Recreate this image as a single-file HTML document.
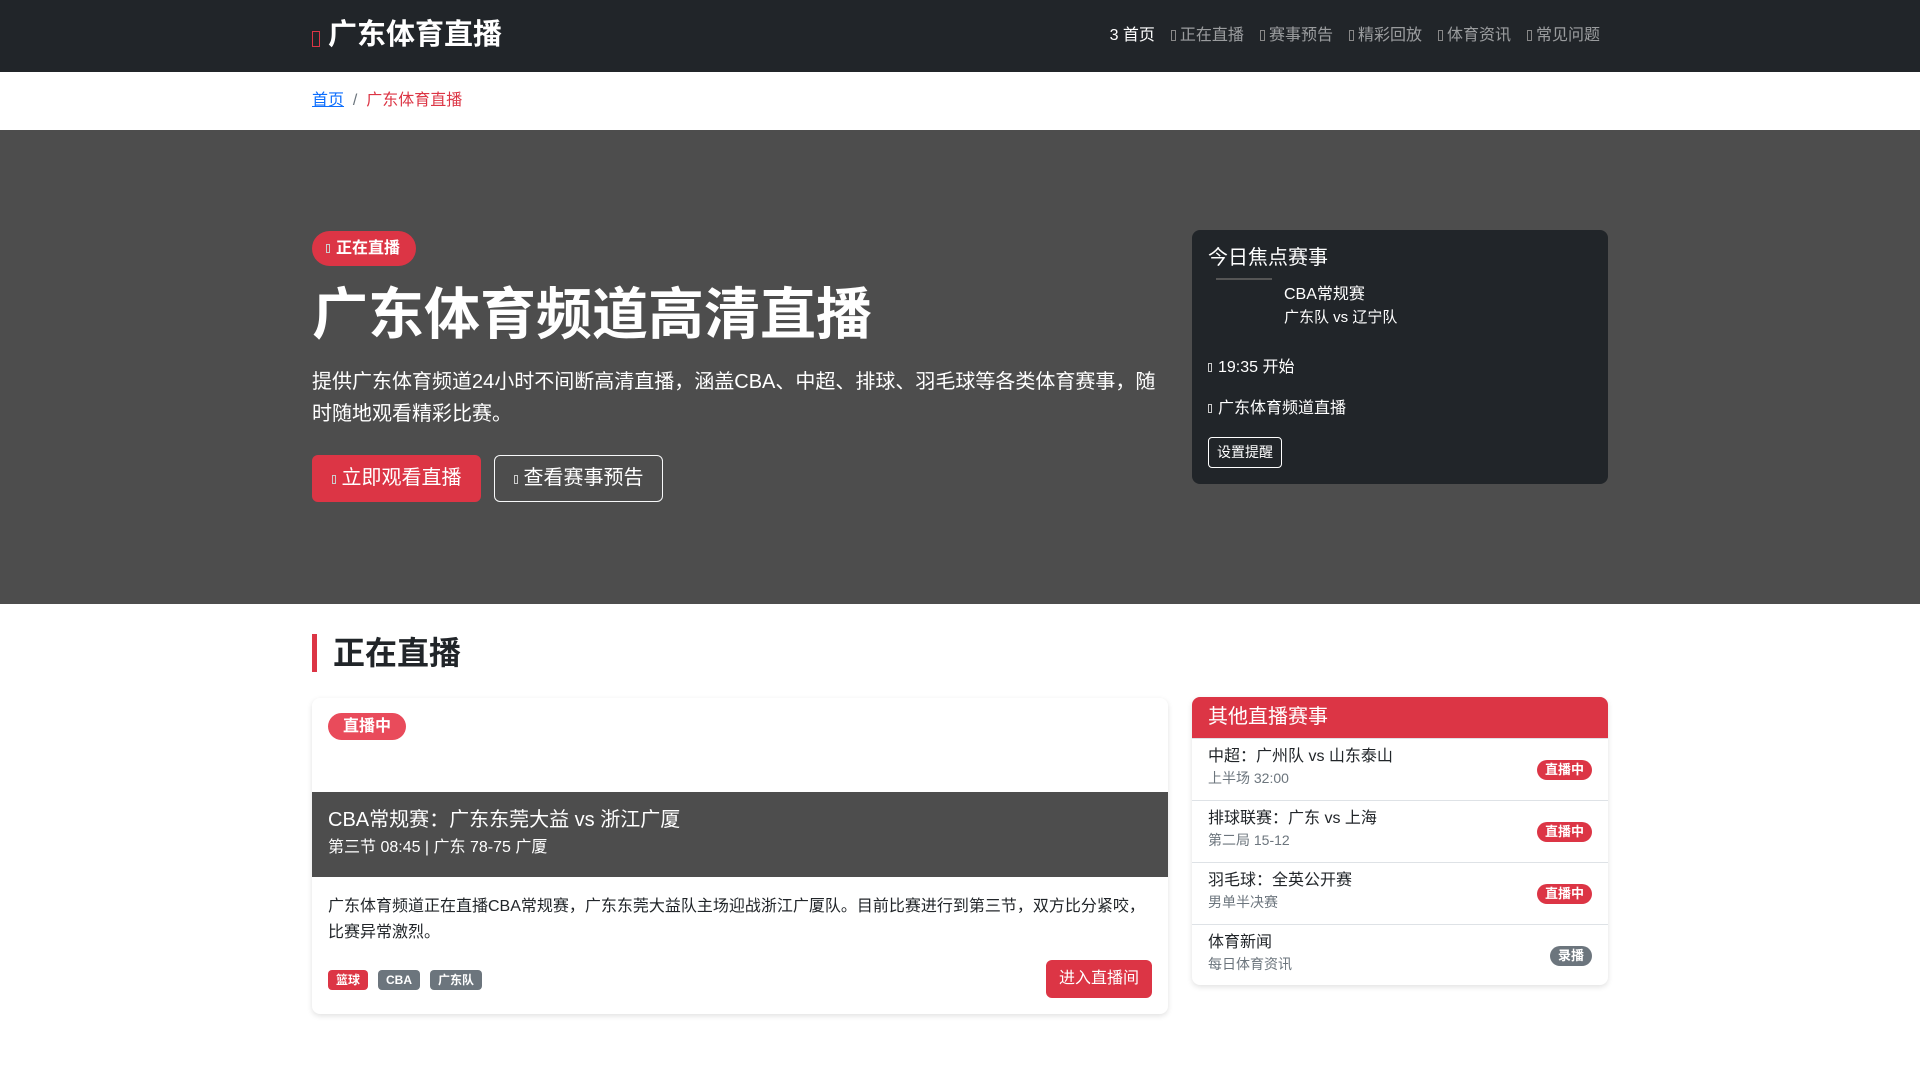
<!DOCTYPE html>
<html><head><meta charset="utf-8"><style>
*{box-sizing:border-box;margin:0;padding:0}
body{width:1920px;height:1080px;overflow:hidden;background:#fff;font-family:"Liberation Sans","Noto Sans CJK SC",sans-serif;color:#212529;font-size:16px;line-height:1.5}
.c{position:absolute}
.nav{position:absolute;left:0;top:0;width:1920px;height:72px;background:#212529}
.brand{left:312px;top:14px;color:#fff;font-size:29px;font-weight:bold}
.brand i{display:inline-block;width:8px;height:16px;border:1.5px solid #dc3545;margin-right:8px;vertical-align:-3px}
.links{right:320px;top:24px;color:rgba(255,255,255,.55);font-size:16px;white-space:nowrap}
.links span{margin-left:16px}
.links b{display:inline-block;width:5px;height:11px;border:1px solid #888;margin-right:4px;vertical-align:-1px}
.bc{left:312px;top:89px;font-size:16px;color:#6c757d}
.hero{position:absolute;left:0;top:130px;width:1920px;height:474px;background:#4d4d4d}
.badge{background:#dc3545;color:#fff;border-radius:20px;font-weight:bold}
.sq{display:inline-block;width:4px;height:9px;border:1px solid #ccc;margin-right:6px}
.btn{position:absolute;border-radius:6px;font-size:20px;color:#fff;text-align:center}
.fc{left:1192px;top:230px;width:416px;height:254px;background:#212529;border-radius:8px;color:#fff}
.sec{left:312px;top:634px;height:38px;border-left:5px solid #dc3545;padding-left:16px;font-size:32px;font-weight:bold;line-height:38px}
.lc{left:312px;top:698px;width:856px;height:316px;background:#fff;border-radius:8px;box-shadow:0 2px 6px rgba(0,0,0,.12);overflow:hidden}
.tag{display:inline-block;color:#fff;font-size:12px;font-weight:bold;padding:1px 8px;border-radius:4px;margin-right:10px}
.sc{left:1192px;top:697px;width:416px;height:288px;background:#fff;border-radius:8px;box-shadow:0 2px 6px rgba(0,0,0,.12);overflow:hidden}
.it{position:absolute;left:0;width:416px;height:62px;border-top:1px solid #dee2e6;padding:6px 16px}
.it .t{font-size:16px}.it .s{font-size:14px;color:#6c757d;line-height:1.3}
.it .b{position:absolute;right:16px;top:21px;font-size:13px;font-weight:bold;color:#fff;padding:0 8px;border-radius:10px;line-height:20px}
</style></head><body>
<div class="nav"></div>
<div class="c brand"><i></i>广东体育直播</div>
<div class="c links"><span style="color:#fff">3 首页</span><span><b></b>正在直播</span><span><b></b>赛事预告</span><span><b></b>精彩回放</span><span><b></b>体育资讯</span><span><b></b>常见问题</span></div>
<div class="c bc"><span style="color:#0d6efd;text-decoration:underline">首页</span> &nbsp;/&nbsp; <span style="color:#dc3545">广东体育直播</span></div>
<div class="hero"></div>
<div class="c badge" style="left:312px;top:231px;height:35px;width:104px;line-height:35px;padding-left:14px;font-size:16px"><span class="sq"></span>正在直播</div>
<div class="c" style="left:312px;top:280px;color:#fff;font-size:56px;font-weight:bold;line-height:70px">广东体育频道高清直播</div>
<div class="c" style="left:312px;top:366px;width:850px;color:#fff;font-size:20px;line-height:32px">提供广东体育频道24小时不间断高清直播，涵盖CBA、中超、排球、羽毛球等各类体育赛事，随时随地观看精彩比赛。</div>
<div class="btn" style="left:312px;top:455px;width:169px;height:47px;background:#dc3545;line-height:47px"><span class="sq"></span>立即观看直播</div>
<div class="btn" style="left:494px;top:455px;width:169px;height:47px;border:1px solid #f8f9fa;line-height:45px"><span class="sq"></span>查看赛事预告</div>
<div class="c fc">
 <div style="position:absolute;left:16px;top:13px;font-size:20px">今日焦点赛事</div>
 <div style="position:absolute;left:24px;top:48px;width:56px;height:2px;background:#555"></div>
 <div style="position:absolute;left:92px;top:53px;font-size:16px">CBA常规赛</div>
 <div style="position:absolute;left:92px;top:77px;font-size:15px">广东队 vs 辽宁队</div>
 <div style="position:absolute;left:16px;top:126px;font-size:16px"><span class="sq"></span>19:35 开始</div>
 <div style="position:absolute;left:16px;top:167px;font-size:16px"><span class="sq"></span>广东体育频道直播</div>
 <div style="position:absolute;left:16px;top:207px;width:74px;height:31px;border:1px solid #fff;border-radius:4px;font-size:14px;text-align:center;line-height:29px">设置提醒</div>
</div>
<div class="c sec">正在直播</div>
<div class="c lc">
 <div class="badge" style="position:absolute;left:16px;top:15px;width:78px;height:27px;line-height:27px;text-align:center;font-size:16px;background:#e94b5b">直播中</div>
 <div style="position:absolute;left:0;top:94px;width:856px;height:85px;background:#4d4d4d;color:#fff;padding:14px 16px 10px">
  <div style="font-size:20px;line-height:28px">CBA常规赛：广东东莞大益 vs 浙江广厦</div>
  <div style="font-size:16px;line-height:28px">第三节 08:45 | 广东 78-75 广厦</div>
 </div>
 <div style="position:absolute;left:16px;top:196px;width:826px;font-size:16px;line-height:26px">广东体育频道正在直播CBA常规赛，广东东莞大益队主场迎战浙江广厦队。目前比赛进行到第三节，双方比分紧咬，比赛异常激烈。</div>
 <div style="position:absolute;left:16px;top:270px"><span class="tag" style="background:#dc3545">篮球</span><span class="tag" style="background:#6c757d">CBA</span><span class="tag" style="background:#6c757d">广东队</span></div>
 <div class="btn" style="left:734px;top:262px;width:106px;height:38px;background:#dc3545;font-size:16px;line-height:38px">进入直播间</div>
</div>
<div class="c sc">
 <div style="height:41px;background:#dc3545;color:#fff;font-size:20px;padding:5px 16px">其他直播赛事</div>
 <div class="it" style="top:41px"><div class="t">中超：广州队 vs 山东泰山</div><div class="s">上半场 32:00</div><span class="b" style="background:#dc3545">直播中</span></div>
 <div class="it" style="top:103px"><div class="t">排球联赛：广东 vs 上海</div><div class="s">第二局 15-12</div><span class="b" style="background:#dc3545">直播中</span></div>
 <div class="it" style="top:165px"><div class="t">羽毛球：全英公开赛</div><div class="s">男单半决赛</div><span class="b" style="background:#dc3545">直播中</span></div>
 <div class="it" style="top:227px"><div class="t">体育新闻</div><div class="s">每日体育资讯</div><span class="b" style="background:#6c757d">录播</span></div>
</div>
</body></html>
